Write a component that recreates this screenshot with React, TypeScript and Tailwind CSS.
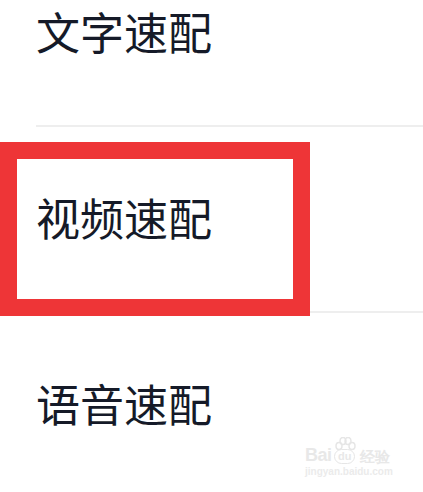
import React from "react";

const items = ["文字速配", "视频速配", "语音速配"];

export default function App() {
  return (
    <div
      className="relative w-[423px] h-[492px] overflow-hidden bg-white"
      style={{ fontFamily: '"Noto Sans CJK SC", "Noto Sans", sans-serif' }}
    >
      <div className="-mt-[59px] pl-9">
        {items.map((t, i) => (
          <div
            key={t}
            className={`h-[186px] pt-[68px] ${i < 2 ? "border-b-2 border-[#eeeeee]" : ""}`}
          >
            <div className="text-[44px] font-normal leading-[44px] text-[#151a28]">{t}</div>
          </div>
        ))}
      </div>

      <div className="absolute left-0 top-[142px] w-[310px] h-[174px] border-[17px] border-[#ee3537]" />

      <div className="absolute left-[305px] top-[437px] flex flex-col items-start text-[#e8e8e8]">
        <div className="flex items-end" style={{ fontFamily: '"Liberation Sans", sans-serif' }}>
          <span className="text-[18px] font-bold leading-none tracking-tight">Bai</span>
          <span className="relative ml-[1px] flex flex-col items-center">
            <svg width="24" height="14" viewBox="0 0 24 14" className="mb-[-2px]">
              <ellipse cx="6" cy="9" rx="3" ry="3.5" fill="none" stroke="#e6e6e6" strokeWidth="1.5" />
              <ellipse cx="10" cy="4" rx="3" ry="3.5" fill="none" stroke="#e6e6e6" strokeWidth="1.5" />
              <ellipse cx="15" cy="4" rx="3" ry="3.5" fill="none" stroke="#e6e6e6" strokeWidth="1.5" />
              <ellipse cx="19" cy="9" rx="3" ry="3.5" fill="none" stroke="#e6e6e6" strokeWidth="1.5" />
            </svg>
            <span className="rounded-full border-[1.5px] border-[#e6e6e6] px-[3px] text-[11px] font-bold leading-[13px]">du</span>
          </span>
          <span className="ml-[3px] text-[15px] font-bold leading-none">经验</span>
        </div>
        <div className="mt-[3px] text-[10px] font-bold leading-none text-[#ebebeb]" style={{ fontFamily: '"Liberation Sans", sans-serif' }}>
          jingyan.baidu.com
        </div>
      </div>
    </div>
  );
}
